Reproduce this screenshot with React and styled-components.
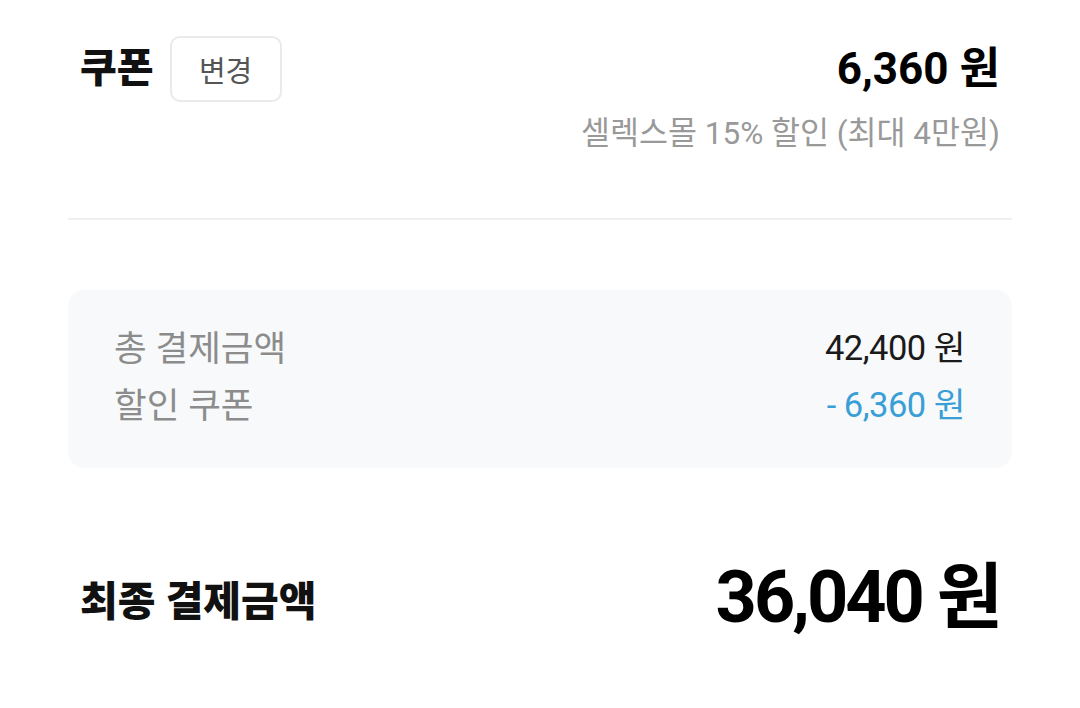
import React from "react";
import styled, { createGlobalStyle } from "styled-components";

const Global = createGlobalStyle`
  html, body { margin: 0; padding: 0; background: #fff; }
  body { font-family: "Roboto", "Noto Sans CJK KR", sans-serif; -webkit-font-smoothing: antialiased; }
`;

const Page = styled.div`
  width: 1080px;
  height: 708px;
  box-sizing: border-box;
  padding: 36px 68px 0;
  display: flex;
  flex-direction: column;
`;

const Section = styled.div`
  padding: 0 12px;
  display: flex;
  flex-direction: column;
`;

const HeaderRow = styled.div`
  display: flex;
  align-items: center;
  justify-content: space-between;
  height: 66px;
`;

const TitleGroup = styled.div`
  display: flex;
  align-items: center;
  gap: 16px;
`;

const Title = styled.h2`
  margin: 0;
  font-size: 40px;
  font-weight: 800;
  color: #111;
  line-height: 1;
`;

const ChangeButton = styled.button`
  width: 112px;
  height: 66px;
  box-sizing: border-box;
  border: 2px solid #eaeaea;
  border-radius: 10px;
  background: #fff;
  font-family: inherit;
  font-size: 29px;
  color: #555;
  padding: 0;
`;

const Amount = styled.div`
  font-size: ${(p) => p.$size}px;
  font-weight: 700;
  color: #000;
  line-height: 1;
  letter-spacing: ${(p) => p.$spacing || 0}px;
`;

const SubText = styled.div`
  margin-top: 12px;
  text-align: right;
  font-size: 31.5px;
  line-height: 40px;
  color: #999;
`;

const Divider = styled.hr`
  margin: 64px 0 0;
  border: none;
  height: 2px;
  background: #efefef;
`;

const SummaryBox = styled.div`
  margin-top: 70px;
  height: 178px;
  box-sizing: border-box;
  border-radius: 16px;
  background: #f7f9fa;
  padding: 33px 47px 0 46px;
  display: flex;
  flex-direction: column;
  gap: 13px;
`;

const SummaryRow = styled.div`
  display: flex;
  justify-content: space-between;
  align-items: center;
  height: 44px;
`;

const Label = styled.span`
  font-size: 35.5px;
  color: #8c8c8c;
`;

const Value = styled.span`
  font-size: 34.5px;
  letter-spacing: -0.5px;
  color: ${(p) => p.$color || "#1a1a1a"};
`;

const FinalRow = styled.div`
  margin-top: 90px;
  padding: 0 12px;
  height: 80px;
  display: flex;
  align-items: center;
  justify-content: space-between;
`;

const FinalLabel = styled.div`
  font-size: 41px;
  font-weight: 800;
  color: #111;
`;

export default function App() {
  return (
    <>
      <Global />
      <Page>
        <Section>
          <HeaderRow>
            <TitleGroup>
              <Title>쿠폰</Title>
              <ChangeButton>변경</ChangeButton>
            </TitleGroup>
            <Amount $size={44}>6,360 원</Amount>
          </HeaderRow>
          <SubText>셀렉스몰 15% 할인 (최대 4만원)</SubText>
        </Section>
        <Divider />
        <SummaryBox>
          <SummaryRow>
            <Label>총 결제금액</Label>
            <Value>42,400 원</Value>
          </SummaryRow>
          <SummaryRow>
            <Label>할인 쿠폰</Label>
            <Value $color="#3a9fd6">- 6,360 원</Value>
          </SummaryRow>
        </SummaryBox>
        <FinalRow>
          <FinalLabel>최종 결제금액</FinalLabel>
          <Amount $size={72} $spacing={-3}>36,040 원</Amount>
        </FinalRow>
      </Page>
    </>
  );
}
